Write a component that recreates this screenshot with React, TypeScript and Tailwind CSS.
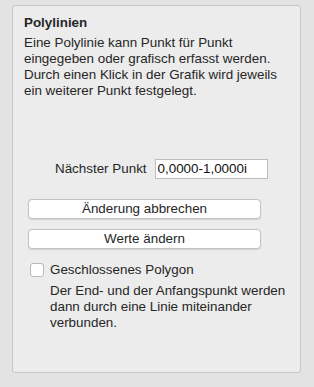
export default function App() {
  return (
    <div className="w-[314px] h-[387px] bg-[#e3e3e3] pt-[5px] pl-[12px] font-['Liberation_Sans',sans-serif] text-[13.4px] text-[#262626]">
      <div className="w-[289px] h-[368px] bg-[#ececec] border border-[#c6c6c6] rounded-[3px] px-[11px] pt-[8px]" data-name="Panel">
        {/* Intro */}
        <p className="font-bold leading-[18px]">Polylinien</p>
        <p className="leading-[16px] mt-[3px]">
          Eine Polylinie kann Punkt für Punkt eingegeben oder grafisch erfasst werden. Durch einen Klick in der Grafik wird jeweils ein weiterer Punkt festgelegt.
        </p>

        {/* Next point */}
        <div className="flex items-center mt-[60px] pl-[31px] gap-[8px]">
          <span className="leading-[16px]">Nächster Punkt</span>
          <div className="w-[113px] h-[20px] bg-white border border-[#bdbdbd] flex items-center px-[2px] leading-[16px] text-[#111]">
            0,0000-1,0000i
          </div>
        </div>

        {/* Buttons */}
        <div className="flex flex-col gap-[10px] mt-[20px] pl-[4px]">
          <div className="w-[233px] h-[20px] bg-white border border-[#c4c4c4] rounded-[4px] shadow-[0_0.5px_1px_rgba(0,0,0,0.12)] flex items-center justify-center leading-[16px]">
            Änderung abbrechen
          </div>
          <div className="w-[233px] h-[20px] bg-white border border-[#c4c4c4] rounded-[4px] shadow-[0_0.5px_1px_rgba(0,0,0,0.12)] flex items-center justify-center leading-[16px]">
            Werte ändern
          </div>
        </div>

        {/* Closed polygon */}
        <div className="flex items-start mt-[13px] pl-[6px] gap-[6px]">
          <div className="w-[14px] h-[14px] mt-[1px] shrink-0 bg-white border border-[#b8b8b8] rounded-[3px]" />
          <div>
            <p className="leading-[16px]">Geschlossenes Polygon</p>
            <p className="leading-[16px] mt-[5px]">
              Der End- und der Anfangspunkt werden dann durch eine Linie miteinander verbunden.
            </p>
          </div>
        </div>
      </div>
    </div>
  );
}
